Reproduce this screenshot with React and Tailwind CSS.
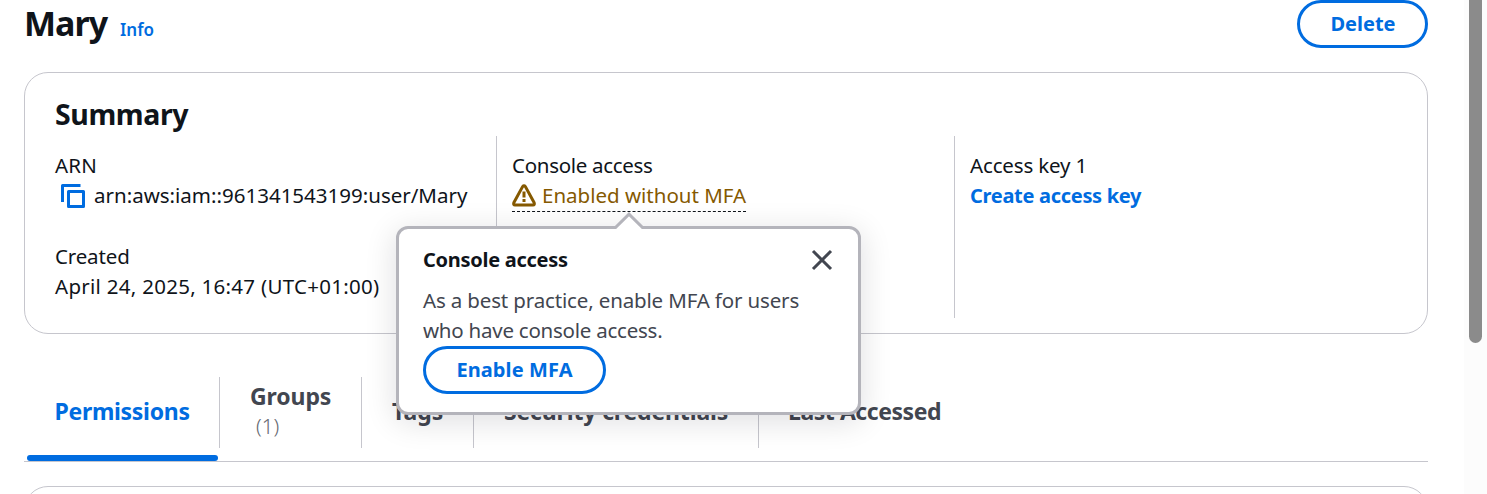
import React from "react";

function CopyIcon() {
  return (
    <svg className="block h-6 w-6 shrink-0" viewBox="0 0 24 24" fill="none" stroke="#006ce0" strokeWidth="3" strokeLinejoin="round">
      <path d="M19.5 1.5H1.5V18" />
      <path d="M7.5 7.5h15v15h-15z" />
    </svg>
  );
}

function WarningIcon() {
  return (
    <svg className="block h-6 w-6 shrink-0" viewBox="0 0 24 24" fill="none" stroke="#855900" strokeWidth="3" strokeLinejoin="round">
      <path d="M10.6 2.6 1.8 18.8Q1.2 21 3 21H21Q22.8 21 22.2 18.8L13.4 2.6Q12 .8 10.6 2.6Z" />
      <path d="M12 7.5v6M12 15v3" />
    </svg>
  );
}

function CloseIcon() {
  return (
    <svg className="block h-6 w-6" viewBox="0 0 24 24" fill="none" stroke="#424650" strokeWidth="3">
      <path d="M3 3l18 18M21 3L3 21" />
    </svg>
  );
}

function Popover() {
  return (
    <div className="absolute top-[46px] left-[-116px] z-10 h-[189px] w-[465px] rounded-[12px] border-[3px] border-[#b4b4bb] bg-white pt-[16px] pl-6 shadow-[0_6px_30px_2px_rgba(0,7,22,0.12)]">
      <svg className="absolute top-[-18px] left-[213px] h-[19px] w-[34px]" viewBox="0 0 34 19">
        <path d="M1.5 19 17 3 32.5 19Z" fill="#fff" />
        <path d="M.5 16.5H3.5L17 3.2 30.5 16.5h3" fill="none" stroke="#b4b4bb" strokeWidth="3" />
      </svg>
      <div className="flex h-[30px] items-center justify-between pr-[24px]">
        <h3 className="text-[20px] leading-[30px] font-bold tracking-[-0.28px] text-[#0f141a]">Console access</h3>
        <button aria-label="Close"><CloseIcon /></button>
      </div>
      <div className="mt-[10px] text-[20.5px] leading-[30px] text-[#424650]">
        <p className="tracking-[-0.15px]">As a best practice, enable MFA for users</p>
        <p className="tracking-[-0.24px]">who have console access.</p>
      </div>
      <button className="mt-px flex h-12 w-[183px] items-center justify-center rounded-[30px] border-[3px] border-[#006ce0] bg-white text-[20px] leading-[30px] font-bold tracking-[0.1px] text-[#006ce0]">
        Enable MFA
      </button>
    </div>
  );
}

function Header() {
  return (
    <header className="flex h-12 items-start justify-between">
      <div className="flex items-baseline">
        <h1 className="text-[34px] leading-[46px] font-bold tracking-[-1px]">Mary</h1>
        <a className="ml-[13px] text-[17px] font-semibold text-[#006ce0]">Info</a>
      </div>
      <button className="flex h-12 w-[131px] items-center justify-center rounded-[30px] border-[3px] border-[#006ce0] pl-px text-[20px] leading-[30px] font-bold text-[#006ce0]">
        Delete
      </button>
    </header>
  );
}

function Summary() {
  return (
    <section className="mt-6 h-[262px] rounded-[24px] border border-[#c6c6cd] pl-[30px]">
      <h2 className="mt-[23px] text-[28.5px] leading-[36px] font-bold tracking-[-0.4px]">Summary</h2>
      <div className="mt-[4px] flex h-[182px] text-[20.5px] leading-[30px]">
        <div className="w-[441px] pt-[14px]">
          <div className="tracking-[0.2px]">ARN</div>
          <div className="flex h-[30px] items-start">
            <span className="mr-[9px] ml-[6px] pt-[4px]"><CopyIcon /></span>
            <span>arn:aws:iam::961341543199:user/Mary</span>
          </div>
          <div className="mt-[31px] tracking-[-0.15px]">Created</div>
          <div className="tracking-[0.28px]">April 24, 2025, 16:47 (UTC+01:00)</div>
        </div>
        <div className="w-[458px] border-l border-[#c6c6cd] pt-[14px] pl-[15px]">
          <div className="tracking-[-0.3px]">Console access</div>
          <div className="relative w-[234px]">
            <div className="flex h-[32px] border-b border-dashed border-[#0f141a] text-[#855900]">
              <span className="mr-[6px] pt-[4px]"><WarningIcon /></span>
              <span className="whitespace-nowrap">Enabled without MFA</span>
            </div>
            <Popover />
          </div>
        </div>
        <div className="border-l border-[#c6c6cd] pt-[14px] pl-[15px]">
          <div className="tracking-[-0.15px]">Access key 1</div>
          <a className="block pt-px text-[20px] font-bold tracking-[-0.3px] text-[#006ce0]">Create access key</a>
        </div>
      </div>
    </section>
  );
}

function Tabs() {
  return (
    <nav className="mt-[43px] flex h-[85px] border-b border-[#c6c6cd] text-[23px] leading-[30px] font-bold whitespace-nowrap text-[#424650]">
      <div className="flex h-full w-[196px] flex-col">
        <div className="flex h-[71px] items-center border-r border-[#c6c6cd] pb-[3px] pl-[30.5px] tracking-[-0.3px] text-[#006ce0]">Permissions</div>
        <div className="mt-[7px] ml-[3px] h-[6px] w-[191px] rounded-[3px] bg-[#006ce0]" />
      </div>
      <div className="flex h-[71px] w-[142px] flex-col justify-center border-r border-[#c6c6cd] pb-[3px] pl-[30px]">
        <span className="tracking-[-0.1px]">Groups</span>
        <span className="pl-[6px] text-[20.5px] font-light text-[#656871]">(1)</span>
      </div>
      <div className="flex h-[71px] w-[112px] items-center border-r border-[#c6c6cd] pb-[3px] pl-[30px]">Tags</div>
      <div className="flex h-[71px] w-[285px] items-center border-r border-[#c6c6cd] pb-[3px] pl-[30px] tracking-[-0.15px]">Security credentials</div>
      <div className="flex h-[71px] items-center pb-[3px] pl-[29px] tracking-[-0.45px]">Last Accessed</div>
    </nav>
  );
}

export default function App() {
  return (
    <div className="flex h-[494px] w-[1487px] overflow-hidden bg-white font-['Noto_Sans','Open_Sans',sans-serif] text-[#0f141a]">
      <main className="ml-6 w-[1404px] shrink-0">
        <Header />
        <Summary />
        <Tabs />
        <section className="mt-6 h-20 rounded-[24px] border border-[#c6c6cd]" />
      </main>
      <div className="ml-9 w-[23px] bg-[#fcfcfc] pl-[5px]">
        <div className="h-[343px] w-[13px] rounded-b-full bg-[#8b8b8b]" />
      </div>
    </div>
  );
}
